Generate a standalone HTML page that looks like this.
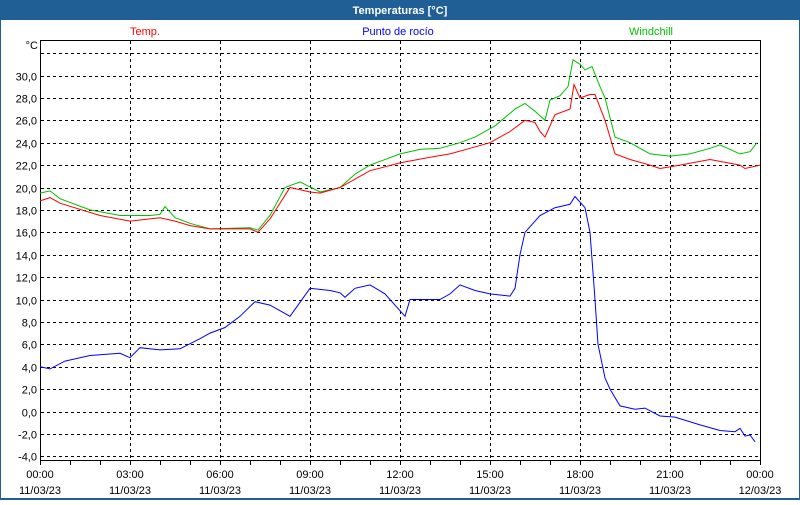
<!DOCTYPE html>
<html><head><meta charset="utf-8"><style>
body{margin:0;width:800px;height:500px;overflow:hidden;background:#fff;font-family:"Liberation Sans","DejaVu Sans",sans-serif;}
</style></head><body>
<svg id="s" width="800" height="500" xmlns="http://www.w3.org/2000/svg" font-family="Liberation Sans, DejaVu Sans, sans-serif" font-size="11">
<rect x="0" y="0" width="800" height="500" fill="#1f5f96"/>
<rect x="1" y="20" width="798" height="478" fill="#fff"/>
<text x="400" y="14" fill="#fff" font-weight="bold" text-anchor="middle">Temperaturas [°C]</text>
<text x="145" y="35" fill="#ff0000" text-anchor="middle">Temp.</text>
<text x="398" y="35" fill="#0000ff" text-anchor="middle">Punto de rocío</text>
<text x="651" y="35" fill="#00c000" text-anchor="middle">Windchill</text>
<text x="38" y="49" text-anchor="end">°C</text>
<g id="grid" stroke="#000" stroke-dasharray="3,3" stroke-width="1"></g>
<g id="lab" fill="#000"></g>
<rect x="40.5" y="40.5" width="720" height="420" fill="none" stroke="#000"/>
<g id="curves" fill="none" stroke-width="1"></g>
</svg>
<script>
var ns="http://www.w3.org/2000/svg";
function Y(v){return 75.5+(30-v)*11.2;}
function el(p,t,a,txt){var e=document.createElementNS(ns,t);for(var k in a)e.setAttribute(k,a[k]);if(txt)e.textContent=txt;document.getElementById(p).appendChild(e);}
for(var v=-4;v<=32;v+=2){var y=Math.round(Y(v))+0.5;el('grid','line',{x1:41,x2:760,y1:y,y2:y});
 if(v<=30)el('lab','text',{x:37,y:y+4,'text-anchor':'end'},(v<0?'-':'')+Math.abs(v).toFixed(1).replace('.',','));}
for(var k=1;k<8;k++){var x=40+90*k+0.5;el('grid','line',{x1:x,x2:x,y1:41,y2:460});}
for(var h=0;h<=24;h++){var x=40+30*h+0.5;el('lab','line',{x1:x,x2:x,y1:461,y2:465,stroke:'#000'});}
var tl=['00:00','03:00','06:00','09:00','12:00','15:00','18:00','21:00','00:00'];
for(var k=0;k<=8;k++){var x=40+90*k;el('lab','text',{x:x,y:478,'text-anchor':'middle'},tl[k]);el('lab','text',{x:x,y:494,'text-anchor':'middle'},k==8?'12/03/23':'11/03/23');}
function poly(d,c){var p=[];for(var i=0;i<d.length;i+=2)p.push(d[i]+','+Y(d[i+1]).toFixed(1));el('curves','polyline',{points:p.join(' '),stroke:c});}
poly([40,19.5,50,19.7,60,19,90,18,120,17.5,150,17.5,160,17.6,165,18.3,175,17.3,190,16.8,210,16.3,250,16.4,258,16.2,270,17.5,285,20,300,20.5,320,19.6,340,20,355,21.2,370,22,400,23,420,23.4,440,23.5,460,24,475,24.5,495,25.5,515,27,525,27.5,535,26.8,545,26,550,27.8,560,28.2,568,29,573,31.4,580,31,585,30.5,592,30.8,600,29,605,28,615,24.5,630,24,650,23,670,22.8,690,23,710,23.5,720,23.8,740,23,750,23.2,757,24],'#00c000');
poly([40,18.8,50,19.1,60,18.6,100,17.5,130,17,160,17.3,175,17,190,16.6,210,16.3,250,16.3,258,16,270,17.2,290,20,310,19.6,320,19.5,340,20,370,21.5,400,22.2,430,22.7,450,23,470,23.5,490,24,510,25,525,26,535,25.8,540,25,545,24.5,555,26.5,570,27,574,29.2,580,28,590,28.3,595,28.3,605,26,615,23,630,22.5,650,22,660,21.7,680,22,710,22.5,740,22,745,21.7,760,22],'#ff0000');
poly([40,4,50,3.8,65,4.5,90,5,120,5.2,130,4.8,140,5.7,160,5.5,180,5.6,200,6.5,210,7,225,7.5,240,8.5,255,9.8,270,9.5,290,8.5,310,11,330,10.8,340,10.6,345,10.2,355,11,370,11.3,385,10.5,400,9,405,8.5,410,10,440,10,450,10.5,460,11.3,475,10.8,490,10.5,510,10.3,515,11,520,14,525,16,540,17.5,555,18.2,570,18.5,575,19.2,585,18.2,590,16,595,10,598,6,605,3,610,2,620,0.5,635,0.2,645,0.3,660,-0.4,675,-0.5,700,-1.2,720,-1.7,735,-1.8,740,-1.5,745,-2.2,750,-2.1,755,-2.7],'#0000ff');
</script>
</body></html>
